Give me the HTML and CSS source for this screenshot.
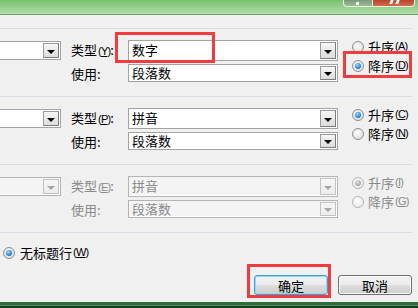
FILE: index.html
```html
<!DOCTYPE html>
<html lang="zh-CN">
<head>
<meta charset="utf-8">
<title>排序</title>
<link rel="stylesheet" href="styles.css">
</head>
<body>
<div class="window">
  <div class="titlebar">
    <div class="cbtn help"><span class="help-dot"></span></div>
    <div class="cbtn close"><span class="close-x"></span></div>
  </div>

  <div class="content">
    <section class="sort-row">
      <div class="combo left-combo"><span class="value"></span><span class="drop"><i class="tri"></i></span></div>
      <div class="fields">
        <span class="label">类型<span class="mn">(<u>Y</u>)</span>:</span>
        <div class="combo type-combo"><span class="value">数字</span><span class="drop"><i class="tri"></i></span></div>
        <span class="label">使用:</span>
        <div class="combo use-combo"><span class="value">段落数</span><span class="drop"><i class="tri"></i></span></div>
      </div>
      <div class="radios">
        <label class="radio-row"><span class="radio"></span>升序<span class="mn">(<u>A</u>)</span></label>
        <label class="radio-row"><span class="radio checked"></span>降序<span class="mn">(<u>D</u>)</span></label>
      </div>
    </section>

    <section class="sort-row">
      <div class="combo left-combo"><span class="value"></span><span class="drop"><i class="tri"></i></span></div>
      <div class="fields">
        <span class="label">类型<span class="mn">(<u>P</u>)</span>:</span>
        <div class="combo type-combo"><span class="value">拼音</span><span class="drop"><i class="tri"></i></span></div>
        <span class="label">使用:</span>
        <div class="combo use-combo"><span class="value">段落数</span><span class="drop"><i class="tri"></i></span></div>
      </div>
      <div class="radios">
        <label class="radio-row"><span class="radio checked"></span>升序<span class="mn">(<u>C</u>)</span></label>
        <label class="radio-row"><span class="radio"></span>降序<span class="mn">(<u>N</u>)</span></label>
      </div>
    </section>

    <section class="sort-row disabled">
      <div class="combo left-combo"><span class="value"></span><span class="drop"><i class="tri"></i></span></div>
      <div class="fields">
        <span class="label">类型<span class="mn">(<u>E</u>)</span>:</span>
        <div class="combo type-combo"><span class="value">拼音</span><span class="drop"><i class="tri"></i></span></div>
        <span class="label">使用:</span>
        <div class="combo use-combo"><span class="value">段落数</span><span class="drop"><i class="tri"></i></span></div>
      </div>
      <div class="radios">
        <label class="radio-row"><span class="radio checked"></span>升序<span class="mn">(<u>I</u>)</span></label>
        <label class="radio-row"><span class="radio"></span>降序<span class="mn">(<u>G</u>)</span></label>
      </div>
    </section>

    <section class="bottom">
      <label class="radio-row header-row"><span class="radio checked"></span>无标题行<span class="mn">(<u>W</u>)</span></label>
      <div class="buttons">
        <button class="btn default">确定</button>
        <button class="btn">取消</button>
      </div>
    </section>
  </div>

  <div class="taskbar"></div>

  <div class="mark mark-type"></div>
  <div class="mark mark-desc"></div>
  <div class="mark mark-ok"></div>
</div>
</body>
</html>
```

FILE: styles.css
```css
* { box-sizing: border-box; }

html, body {
  margin: 0;
  padding: 0;
  width: 418px;
  height: 308px;
  overflow: hidden;
  background: #f0f0f0;
}

.window {
  position: relative;
  width: 418px;
  height: 308px;
  display: flex;
  flex-direction: column;
  background: #f0f0f0;
  font-family: "Noto Sans CJK SC", "Noto Sans", sans-serif;
  font-size: 13px;
  line-height: 15px;
  color: #000;
}

/* ---------- title bar ---------- */
.titlebar {
  height: 15px;
  flex: none;
  display: flex;
  justify-content: flex-end;
  align-items: flex-start;
  padding-right: 3px;
  background: linear-gradient(#79c16f, #a9d8a0 85%, #b9e0b2);
  border-bottom: 1px solid #6aa062;
}

.cbtn {
  height: 7px;
  position: relative;
  border: 1px solid #e8f2e4;
  border-top: none;
}
.help {
  width: 29px;
  background: linear-gradient(#7c9b78, #9db899);
  border-radius: 0 0 0 4px;
  border-right: none;
}
.close {
  width: 43px;
  background: linear-gradient(#b8442c, #d46a4c);
  border-radius: 0 0 4px 0;
}
.help-dot {
  position: absolute;
  left: 12px;
  top: 2px;
  width: 3px;
  height: 3px;
  background: #f4f4f4;
}
.close-x {
  position: absolute;
  left: 17px;
  top: 0;
  width: 9px;
  height: 4px;
  border-left: 3px solid #f4f4f4;
  border-right: 3px solid #f4f4f4;
  transform: skewX(-20deg);
}

/* ---------- content ---------- */
.content {
  flex: 1;
  padding-top: 13px;
  padding-right: 6px;
  display: flex;
  flex-direction: column;
}

.sort-row {
  height: 68px;
  border-top: 1px solid #d6dde5;
  display: flex;
  align-items: flex-start;
  padding-top: 11px;
}

/* combos */
.combo {
  display: flex;
  background: #fff;
  border: 1px solid #a3a3a3;
}
.combo .value {
  flex: 1;
  padding-left: 3px;
  line-height: 17px;
  white-space: nowrap;
}
.combo .drop {
  width: 16px;
  margin: 1px;
  border: 1px solid #9a9a9a;
  border-right-color: #7c7c7c;
  border-bottom-color: #7c7c7c;
  background: linear-gradient(#f6f6f6, #dcdcdc);
  display: flex;
  align-items: center;
  justify-content: center;
}
.tri {
  width: 0;
  height: 0;
  border-left: 4px solid transparent;
  border-right: 4px solid transparent;
  border-top: 4px solid #000;
  margin-top: 2px;
}

.left-combo {
  width: 61px;
  height: 19px;
  margin-top: 1px;
  border-left: none;
}

.fields {
  margin-left: 10px;
  display: grid;
  grid-template-columns: 57px 210px;
  grid-template-rows: 21px 18px;
  row-gap: 3px;
  align-items: center;
}
.type-combo { height: 21px; }
.use-combo { height: 18px; }
.use-combo .value { line-height: 15px; }

.label { white-space: nowrap; }
.mn {
  font-family: "Liberation Sans", sans-serif;
  font-size: 11px;
  letter-spacing: -0.8px;
  margin-left: 1px;
}

.radios {
  margin-left: 14px;
  margin-top: -3px;
  display: flex;
  flex-direction: column;
}
.radio-row {
  display: flex;
  align-items: center;
  height: 19px;
  white-space: nowrap;
}
.radio {
  width: 12px;
  height: 12px;
  border-radius: 50%;
  border: 1px solid #8d8f91;
  background: radial-gradient(circle at 45% 40%, #ffffff, #dcdcdc 80%);
  margin-right: 4px;
  position: relative;
  flex: none;
}
.radio.checked::after {
  content: "";
  position: absolute;
  left: 2px;
  top: 2px;
  width: 6px;
  height: 6px;
  border-radius: 50%;
  background: radial-gradient(circle at 40% 35%, #9ee0ff, #2a8ad6 55%, #0f4f8f);
}

/* disabled */
.disabled { color: #8a8a8a; }
.disabled .combo {
  background: #f4f4f4;
  border-color: #b4b4b4;
  box-shadow: inset -1px -1px 0 #fff;
}
.disabled .combo .drop {
  border-color: #c3c3c3;
  background: linear-gradient(#f6f6f6, #ececec);
}
.disabled .tri { border-top-color: #a6a6a6; }
.disabled .radio {
  border-color: #b7b7b7;
  background: radial-gradient(circle at 45% 40%, #ffffff, #e8e8e8 80%);
}
.disabled .radio.checked::after {
  background: radial-gradient(circle at 40% 35%, #e0e0e0, #a8a8a8 70%);
}

/* bottom area */
.bottom {
  flex: 1;
  border-top: 1px solid #d6dde5;
  display: flex;
  flex-direction: column;
  padding-top: 10px;
}
.header-row { margin-left: 3px; }
.header-row .radio { margin-right: 5px; }

.buttons {
  margin-top: 13px;
  display: flex;
  justify-content: flex-end;
  gap: 10px;
}
.btn {
  width: 74px;
  height: 20px;
  padding: 0;
  font: inherit;
  color: #000;
  border: 1px solid #707070;
  border-radius: 3px;
  background: linear-gradient(#f2f2f2 0%, #ebebeb 50%, #dddddd 51%, #cfcfcf 100%);
  box-shadow: inset 0 0 0 1px #fbfbfb;
}
.btn.default {
  border-color: #3c9fd8;
  box-shadow: inset 0 0 0 1px #8fdcf8;
}

.taskbar {
  height: 6px;
  flex: none;
  background: linear-gradient(#2f6e3a 0, #2f6e3a 3px, #5a8a60 3px, #5a8a60 4px, #173d20 4px);
}

/* red annotation boxes */
.mark {
  position: absolute;
  border: 3px solid #f03c3c;
}
.mark-type { left: 115px; top: 32px; width: 100px; height: 31px; }
.mark-desc { left: 343px; top: 51px; width: 69px; height: 27px; }
.mark-ok { left: 247px; top: 264px; width: 84px; height: 34px; }
```
